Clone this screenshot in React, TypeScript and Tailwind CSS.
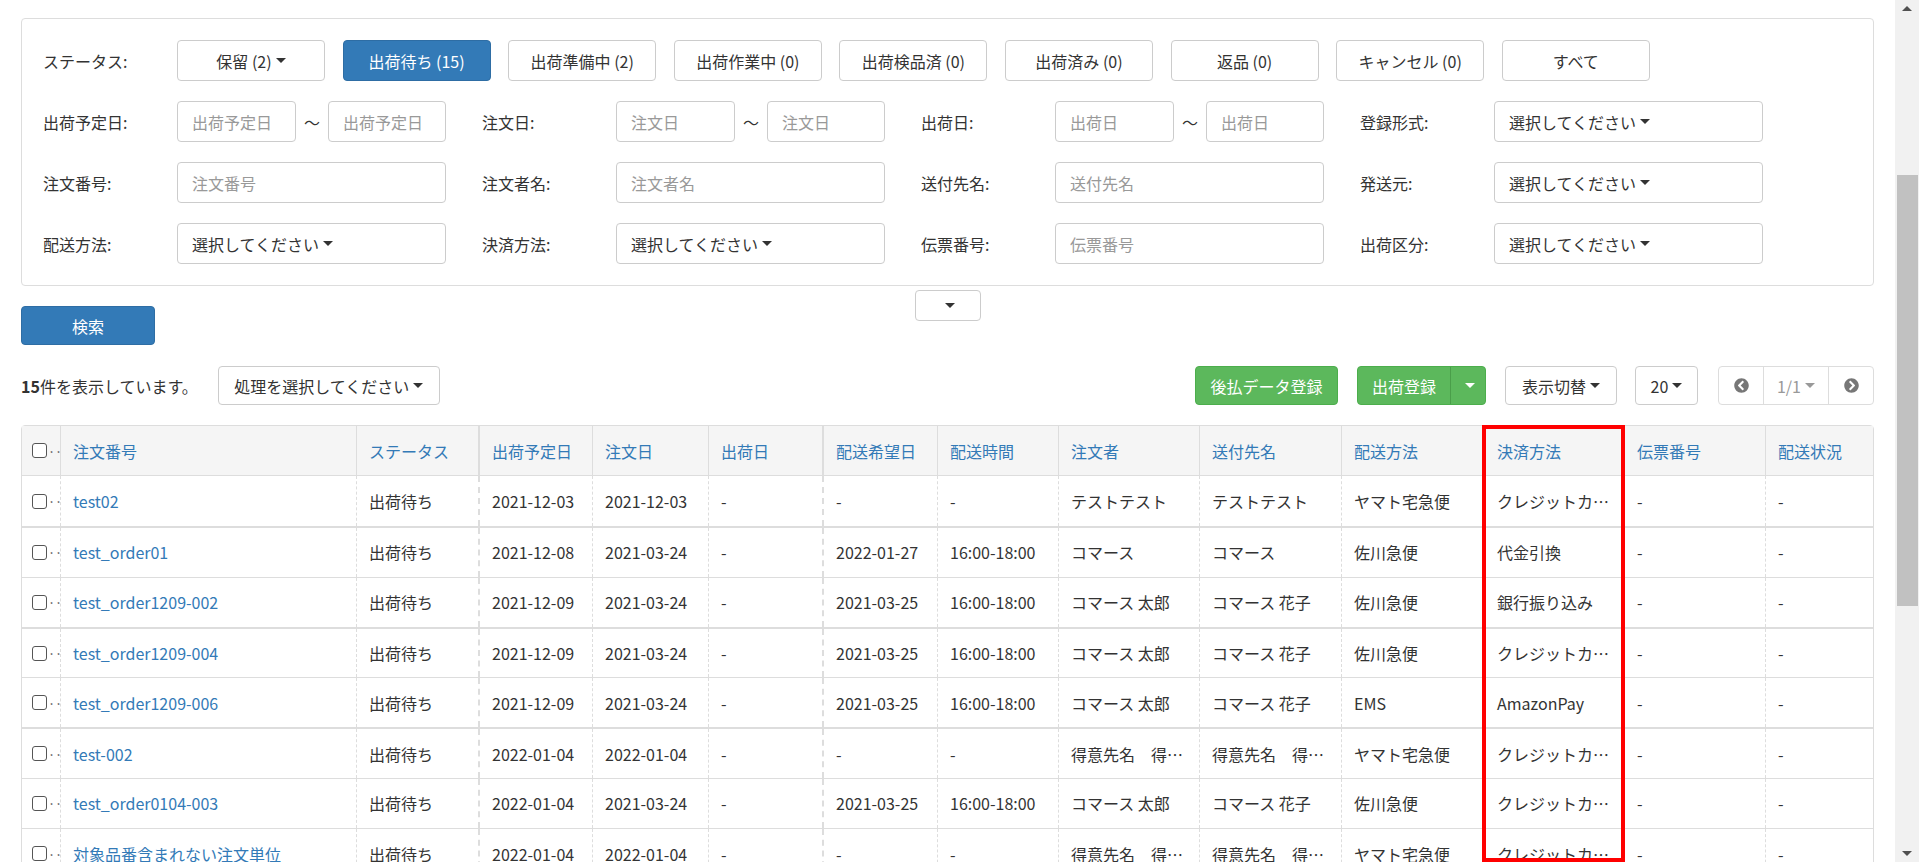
import { FaChevronCircleLeft, FaChevronCircleRight } from "react-icons/fa";

type Row = {
  no: string;
  status: string;
  plan: string;
  order: string;
  ship: string;
  wish: string;
  time: string;
  buyer: string;
  dest: string;
  method: string;
  pay: string;
  slip: string;
  state: string;
};

const rows: Row[] = [
  { no: "test02", status: "出荷待ち", plan: "2021-12-03", order: "2021-12-03", ship: "-", wish: "-", time: "-", buyer: "テストテスト", dest: "テストテスト", method: "ヤマト宅急便", pay: "クレジットカ…", slip: "-", state: "-" },
  { no: "test_order01", status: "出荷待ち", plan: "2021-12-08", order: "2021-03-24", ship: "-", wish: "2022-01-27", time: "16:00-18:00", buyer: "コマース", dest: "コマース", method: "佐川急便", pay: "代金引換", slip: "-", state: "-" },
  { no: "test_order1209-002", status: "出荷待ち", plan: "2021-12-09", order: "2021-03-24", ship: "-", wish: "2021-03-25", time: "16:00-18:00", buyer: "コマース 太郎", dest: "コマース 花子", method: "佐川急便", pay: "銀行振り込み", slip: "-", state: "-" },
  { no: "test_order1209-004", status: "出荷待ち", plan: "2021-12-09", order: "2021-03-24", ship: "-", wish: "2021-03-25", time: "16:00-18:00", buyer: "コマース 太郎", dest: "コマース 花子", method: "佐川急便", pay: "クレジットカ…", slip: "-", state: "-" },
  { no: "test_order1209-006", status: "出荷待ち", plan: "2021-12-09", order: "2021-03-24", ship: "-", wish: "2021-03-25", time: "16:00-18:00", buyer: "コマース 太郎", dest: "コマース 花子", method: "EMS", pay: "AmazonPay", slip: "-", state: "-" },
  { no: "test-002", status: "出荷待ち", plan: "2022-01-04", order: "2022-01-04", ship: "-", wish: "-", time: "-", buyer: "得意先名　得…", dest: "得意先名　得…", method: "ヤマト宅急便", pay: "クレジットカ…", slip: "-", state: "-" },
  { no: "test_order0104-003", status: "出荷待ち", plan: "2022-01-04", order: "2021-03-24", ship: "-", wish: "2021-03-25", time: "16:00-18:00", buyer: "コマース 太郎", dest: "コマース 花子", method: "佐川急便", pay: "クレジットカ…", slip: "-", state: "-" },
  { no: "対象品番含まれない注文単位", status: "出荷待ち", plan: "2022-01-04", order: "2022-01-04", ship: "-", wish: "-", time: "-", buyer: "得意先名　得…", dest: "得意先名　得…", method: "ヤマト宅急便", pay: "クレジットカ…", slip: "-", state: "-" },
  { no: "test_order0104-004", status: "出荷待ち", plan: "2022-01-04", order: "2021-03-24", ship: "-", wish: "2021-03-25", time: "16:00-18:00", buyer: "コマース 太郎", dest: "コマース 花子", method: "佐川急便", pay: "代金引換", slip: "-", state: "-" },
];

const headers = ["注文番号", "ステータス", "出荷予定日", "注文日", "出荷日", "配送希望日", "配送時間", "注文者", "送付先名", "配送方法", "決済方法", "伝票番号", "配送状況"];

// widths of columns after the checkbox column
const colW = [
  "w-[296px]",
  "w-[122px]",
  "w-[114px] border-l-2",
  "w-[116px]",
  "w-[114px]",
  "w-[115px] border-l-2",
  "w-[121px]",
  "w-[141px]",
  "w-[142px]",
  "w-[143px]",
  "w-[140px]",
  "w-[141px]",
  "flex-1",
];

const statuses = ["保留 (2)", "出荷待ち (15)", "出荷準備中 (2)", "出荷作業中 (0)", "出荷検品済 (0)", "出荷済み (0)", "返品 (0)", "キャンセル (0)", "すべて"];

function Caret({ className = "" }: { className?: string }) {
  return (
    <span
      className={`inline-block w-0 h-0 ml-[4px] border-x-[5px] border-x-transparent border-t-[5px] ${className}`}
    />
  );
}

function Checkbox() {
  return (
    <span className="flex items-center">
      <span className="inline-block w-[15px] h-[15px] rounded-[3px] border-[1.5px] border-[#555] bg-white" />
      <span className="text-[#555] text-[14px] leading-none ml-[1px]">‥</span>
    </span>
  );
}

function TextInput({ placeholder, className = "" }: { placeholder: string; className?: string }) {
  return (
    <input
      readOnly
      placeholder={placeholder}
      className={`h-[41px] border border-[#ccc] rounded-[4px] pl-[14px] text-[16px] outline-none placeholder:text-[#999] ${className}`}
    />
  );
}

function SelectBox() {
  return (
    <div className="w-[269px] h-[41px] border border-[#ccc] rounded-[4px] pl-[14px] flex items-center text-[16px] text-[#333]">
      選択してください
      <Caret className="border-t-[#333]" />
    </div>
  );
}

function DateRange({ placeholder }: { placeholder: string }) {
  return (
    <div className="w-[269px] flex items-center">
      <TextInput placeholder={placeholder} className="w-[119px]" />
      <span className="w-[32px] text-center text-[#333]">〜</span>
      <TextInput placeholder={placeholder} className="w-[118px]" />
    </div>
  );
}

function Field({ label, children }: { label: string; children: React.ReactNode }) {
  return (
    <div className="w-[439px] flex items-center shrink-0">
      <div className="w-[134px] text-[#333]">{label}</div>
      {children}
    </div>
  );
}

function Scrollbar() {
  return (
    <div className="w-[24px] shrink-0 bg-[#f1f1f1] flex flex-col items-center">
      <div className="h-[17px] flex items-center justify-center">
        <span className="w-0 h-0 border-x-[5px] border-x-transparent border-b-[5px] border-b-[#505050]" />
      </div>
      <div className="h-[158px]" />
      <div className="w-[21px] h-[431px] bg-[#c1c1c1]" />
      <div className="flex-1" />
      <div className="h-[17px] flex items-center justify-center">
        <span className="w-0 h-0 border-x-[5px] border-x-transparent border-t-[5px] border-t-[#505050]" />
      </div>
    </div>
  );
}

export default function App() {
  return (
    <div className="relative flex h-screen overflow-hidden bg-white text-[16px] text-[#333] font-['Noto_Sans_CJK_JP',sans-serif]">
      <main className="flex-1 min-w-0 px-[21px] pt-[18px]">
        {/* search panel */}
        <div className="border border-[#ddd] rounded-[4px] px-[21px] py-[21px] flex flex-col gap-[20px]">
          <div className="flex items-center">
            <div className="w-[134px]">ステータス:</div>
            <div className="flex gap-[17.6px]">
              {statuses.map((s, i) => (
                <button
                  key={s}
                  className={`w-[148px] h-[41px] rounded-[4px] border flex items-center justify-center ${
                    i === 1 ? "bg-[#337ab7] border-[#2e6da4] text-white" : "bg-white border-[#ccc] text-[#333]"
                  }`}
                >
                  {s}
                  {i === 0 && <Caret className="border-t-[#333]" />}
                </button>
              ))}
            </div>
          </div>
          <div className="flex">
            <Field label="出荷予定日:"><DateRange placeholder="出荷予定日" /></Field>
            <Field label="注文日:"><DateRange placeholder="注文日" /></Field>
            <Field label="出荷日:"><DateRange placeholder="出荷日" /></Field>
            <Field label="登録形式:"><SelectBox /></Field>
          </div>
          <div className="flex">
            <Field label="注文番号:"><TextInput placeholder="注文番号" className="w-[269px]" /></Field>
            <Field label="注文者名:"><TextInput placeholder="注文者名" className="w-[269px]" /></Field>
            <Field label="送付先名:"><TextInput placeholder="送付先名" className="w-[269px]" /></Field>
            <Field label="発送元:"><SelectBox /></Field>
          </div>
          <div className="flex">
            <Field label="配送方法:"><SelectBox /></Field>
            <Field label="決済方法:"><SelectBox /></Field>
            <Field label="伝票番号:"><TextInput placeholder="伝票番号" className="w-[269px]" /></Field>
            <Field label="出荷区分:"><SelectBox /></Field>
          </div>
        </div>

        {/* search button + panel toggle */}
        <div className="grid grid-cols-[1fr_auto_1fr] mt-[4px]">
          <div>
            <button className="mt-[16px] w-[134px] h-[39px] rounded-[4px] bg-[#337ab7] border border-[#2e6da4] text-white">
              検索
            </button>
          </div>
          <button className="w-[66px] h-[31px] border border-[#ccc] rounded-[4px] bg-white flex items-center justify-center">
            <Caret className="ml-0 border-t-[#333]" />
          </button>
          <div />
        </div>

        {/* toolbar */}
        <div className="flex items-center mt-[21px] h-[39px]">
          <div className="text-[16px]">
            <span className="font-bold">15</span>件を表示しています。
          </div>
          <button className="ml-[20px] w-[222px] h-[39px] border border-[#ccc] rounded-[4px] bg-white flex items-center justify-center">
            処理を選択してください
            <Caret className="border-t-[#333]" />
          </button>
          <div className="flex-1" />
          <button className="w-[143px] h-[39px] rounded-[4px] bg-[#5cb85c] border border-[#4cae4c] text-white">
            後払データ登録
          </button>
          <div className="ml-[19px] w-[129px] h-[39px] rounded-[4px] bg-[#5cb85c] border border-[#4cae4c] text-white flex">
            <div className="w-[92px] flex items-center justify-center">出荷登録</div>
            <div className="flex-1 border-l border-[#4a9e4a] flex items-center justify-center">
              <Caret className="ml-0 border-t-white" />
            </div>
          </div>
          <button className="ml-[19px] w-[112px] h-[39px] border border-[#ccc] rounded-[4px] bg-white flex items-center justify-center">
            表示切替
            <Caret className="border-t-[#333]" />
          </button>
          <button className="ml-[18px] w-[63px] h-[39px] border border-[#ccc] rounded-[4px] bg-white flex items-center justify-center">
            20
            <Caret className="border-t-[#333]" />
          </button>
          <div className="ml-[20px] w-[156px] h-[39px] border border-[#ddd] rounded-[4px] flex">
            <div className="w-[44px] flex items-center justify-center text-[#777]">
              <FaChevronCircleLeft size={15} />
            </div>
            <div className="w-[66px] border-x border-[#ddd] flex items-center justify-center text-[#999]">
              1/1
              <Caret className="border-t-[#999]" />
            </div>
            <div className="flex-1 flex items-center justify-center text-[#777]">
              <FaChevronCircleRight size={15} />
            </div>
          </div>
        </div>

        {/* table */}
        <div className="mt-[20px] border border-[#ddd] rounded-t-[4px]">
          <div className="flex h-[50px] bg-[#f5f5f5] border-b border-[#ddd]">
            <div className="w-[38px] pl-[10px] flex items-center">
              <Checkbox />
            </div>
            {headers.map((h, i) => (
              <div
                key={h}
                className={`${colW[i]} border-l border-[#ddd] px-[12px] flex items-center text-[#337ab7] whitespace-nowrap`}
              >
                {h}
              </div>
            ))}
          </div>
          {rows.map((r, ri) => {
            const cells = [r.status, r.plan, r.order, r.ship, r.wish, r.time, r.buyer, r.dest, r.method, r.pay, r.slip, r.state];
            const top = ri === 0 ? "" : ri === 1 || ri === 3 || ri === 5 ? "border-t-2 border-[#ddd]" : "border-t border-[#ddd]";
            return (
              <div key={ri} className={`flex h-[50.3px] ${top}`}>
                <div className="w-[38px] pl-[10px] flex items-center">
                  <Checkbox />
                </div>
                <div className={`${colW[0]} border-l border-dashed border-[#ddd] px-[12px] flex items-center text-[#337ab7] whitespace-nowrap overflow-hidden`}>
                  {r.no}
                </div>
                {cells.map((c, ci) => (
                  <div
                    key={ci}
                    className={`${colW[ci + 1]} border-l border-dashed border-[#ddd] px-[12px] flex items-center whitespace-nowrap overflow-hidden`}
                  >
                    {c}
                  </div>
                ))}
              </div>
            );
          })}
        </div>
      </main>
      <Scrollbar />

      {/* highlight box drawn over the 決済方法 column */}
      <div className="absolute left-[1482px] top-[425px] w-[143px] h-[437px] border-4 border-[#ff0000] pointer-events-none" />
    </div>
  );
}
